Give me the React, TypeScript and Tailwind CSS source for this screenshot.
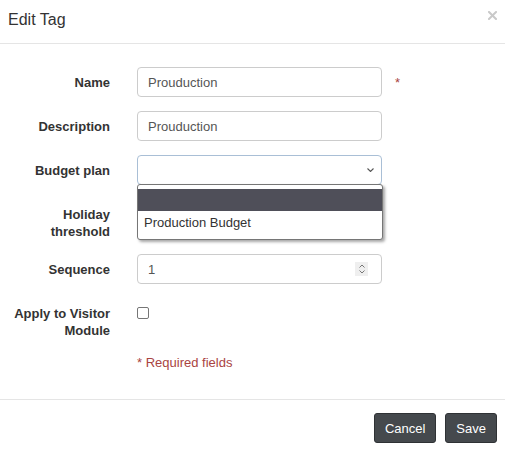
import React from "react";

const Label = ({ children }: { children: React.ReactNode }) => (
  <div className="w-[110px] shrink-0 text-right font-bold pt-[7px] leading-[17px] text-[#333]">
    {children}
  </div>
);

const boxCls =
  "ml-[27px] w-[245px] h-[30px] border border-[#cccccc] rounded-[4px] flex items-center pl-[10px] text-[#555] leading-[17px]";

export default function App() {
  return (
    <div className="w-[505px] h-[454px] bg-white text-[13px] text-[#333] font-['Liberation_Sans',Arial,sans-serif] relative overflow-hidden">
      {/* header */}
      <div className="h-[44px] border-b border-[#e5e5e5] flex justify-between px-[8px]">
        <div className="pt-[11px] text-[16px] leading-[18px] text-[#333]">Edit Tag</div>
        <svg className="mt-[11px]" width="9" height="9" viewBox="0 0 9 9">
          <path d="M1 1L8 8M8 1L1 8" stroke="#c9c9c9" strokeWidth="2" strokeLinecap="square" />
        </svg>
      </div>

      {/* body */}
      <div className="pt-[23px] h-[355px] flex flex-col">
        <div className="flex flex-col gap-[14px]">
          {/* Name */}
          <div className="flex items-start">
            <Label>Name</Label>
            <div className={boxCls}>Prouduction</div>
            <div className="ml-[13px] pt-[7px] leading-[17px] text-[#a94442]">*</div>
          </div>
          {/* Description */}
          <div className="flex items-start">
            <Label>Description</Label>
            <div className={boxCls}>Prouduction</div>
          </div>
          {/* Budget plan */}
          <div className="flex items-start relative z-10">
            <Label>Budget plan</Label>
            <div className="ml-[27px] relative">
              <div className="w-[245px] h-[30px] border border-[#a9bfd6] rounded-[4px] flex items-center justify-end pr-[7px]">
                <svg width="7" height="4" viewBox="0 0 7 4">
                  <path d="M0.5 0.5L3.5 3.5L6.5 0.5" stroke="#555" strokeWidth="1.1" fill="none" />
                </svg>
              </div>
              <div className="absolute top-[29px] left-0 w-[246px] h-[56px] bg-white border border-[#767676] rounded-[3px] shadow-[2px_2px_3px_rgba(0,0,0,0.35)] pt-[4px]">
                <div className="h-[22px] bg-[#4f4f59]" />
                <div className="h-[24px] leading-[24px] pl-[6px] text-[#333]">Production Budget</div>
              </div>
            </div>
          </div>
          {/* Holiday threshold */}
          <div className="flex items-start">
            <Label>
              Holiday
              <br />
              threshold
            </Label>
            <div className={boxCls}></div>
          </div>
          {/* Sequence */}
          <div className="flex items-start">
            <Label>Sequence</Label>
            <div className={boxCls + " justify-between pr-[13px]"}>
              <span>1</span>
              <div className="w-[13px] h-[14px] bg-[#efefef] flex flex-col items-center justify-center gap-[2px]">
                <svg width="6" height="4" viewBox="0 0 6 4">
                  <path d="M0.5 3.5L3 1L5.5 3.5" stroke="#777" strokeWidth="1" fill="none" />
                </svg>
                <svg width="6" height="4" viewBox="0 0 6 4">
                  <path d="M0.5 0.5L3 3L5.5 0.5" stroke="#777" strokeWidth="1" fill="none" />
                </svg>
              </div>
            </div>
          </div>
          {/* Apply to visitor */}
          <div className="flex items-start">
            <Label>
              Apply to Visitor
              <br />
              Module
            </Label>
            <div className="ml-[27px] mt-[9px] w-[12px] h-[12px] border border-[#767676] rounded-[2px] bg-white" />
          </div>
        </div>
        <div className="mt-[15px] ml-[137px] leading-[17px] text-[#a94442]">* Required fields</div>
      </div>

      {/* footer */}
      <div className="border-t border-[#e5e5e5] pt-[13px] pr-[8px] flex justify-end gap-[9px]">
        <button className="h-[30px] px-[10px] bg-[#45494d] border border-[#2f3235] rounded-[3px] text-white leading-[17px]">
          Cancel
        </button>
        <button className="h-[30px] px-[10px] bg-[#45494d] border border-[#2f3235] rounded-[3px] text-white leading-[17px]">
          Save
        </button>
      </div>
    </div>
  );
}
